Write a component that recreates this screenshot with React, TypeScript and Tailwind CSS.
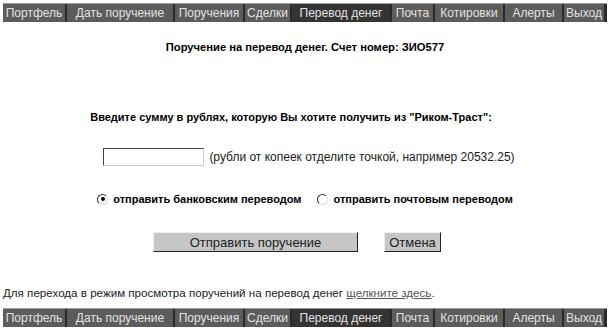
import React from "react";

const items: { label: string; w: string; active?: boolean }[] = [
  { label: "Портфель", w: "w-[64px]" },
  { label: "Дать поручение", w: "w-[108px]" },
  { label: "Поручения", w: "w-[70px]" },
  { label: "Сделки", w: "w-[47px]" },
  { label: "Перевод денег", w: "w-[100px]", active: true },
  { label: "Почта", w: "w-[43px]" },
  { label: "Котировки", w: "w-[70px]" },
  { label: "Алерты", w: "w-[59px]" },
  { label: "Выход", w: "w-[42px]" },
];

function Nav() {
  return (
    <div className="mx-[3px] flex h-[19px] border-t border-[#9a9a9a] bg-[#2a2a2a]">
      {items.map((it) => (
        <div
          key={it.label}
          className={`${it.w} flex items-center justify-center whitespace-nowrap border-r-2 border-[#2a2a2a] text-[12px] leading-none text-[#e2e2e2] ${
            it.active ? "bg-[#343434]" : "bg-[#5c5c5c]"
          }`}
        >
          {it.label}
        </div>
      ))}
    </div>
  );
}

function Radio({ checked }: { checked?: boolean }) {
  return (
    <span className="relative inline-block h-[11px] w-[11px] rounded-full border border-t-[#333] border-l-[#333] border-r-[#ddd] border-b-[#ddd] bg-white">
      {checked && (
        <span className="absolute left-[2.5px] top-[2.5px] h-[4px] w-[4px] rounded-full bg-black" />
      )}
    </span>
  );
}

export default function App() {
  return (
    <div
      className="h-[331px] w-[610px] overflow-hidden bg-white pt-[3px] text-black"
      style={{ fontFamily: '"Liberation Sans", Arial, sans-serif' }}
    >
      <Nav />
      <div className="mt-[18px] text-center text-[11.2px] font-bold leading-[14px]">
        Поручение на перевод денег. Счет номер: ЗИО577
      </div>
      <div className="mt-[56px] pr-[28px] text-center text-[11px] font-bold leading-[14px]">
        Введите сумму в рублях, которую Вы хотите получить из "Риком-Траст":
      </div>
      <div className="mt-[24px] flex items-center justify-center gap-[5px] pl-[8px]">
        <div className="h-[18px] w-[101px] border border-t-[#444] border-l-[#444] border-r-[#ccc] border-b-[#ccc] bg-white" />
        <span className="text-[12px] text-[#222]">
          (рубли от копеек отделите точкой, например 20532.25)
        </span>
      </div>
      <div className="mt-[26px] flex items-center justify-center text-[11px] font-bold leading-[14px]">
        <Radio checked />
        <span className="ml-[5px]">отправить банковским переводом</span>
        <span className="ml-[16px] flex">
          <Radio />
        </span>
        <span className="ml-[5px]">отправить почтовым переводом</span>
      </div>
      <div className="mt-[26px] flex items-center justify-center gap-[26px] pr-[16px]">
        <button className="h-[20px] w-[205px] border border-t-[#eee] border-l-[#eee] border-r-[#222] border-b-[#222] bg-[#c6c6c6] text-[13px] text-[#222]">
          Отправить поручение
        </button>
        <button className="h-[20px] w-[57px] border border-t-[#eee] border-l-[#eee] border-r-[#222] border-b-[#222] bg-[#c6c6c6] text-[13px] text-[#222]">
          Отмена
        </button>
      </div>
      <div className="mt-[34px] px-[3px] text-[11.6px] leading-[14px] text-[#222]">
        Для перехода в режим просмотра поручений на перевод денег{" "}
        <span className="text-[#555] underline">щелкните здесь</span>.
      </div>
      <div className="mt-[8px]">
        <Nav />
      </div>
    </div>
  );
}
